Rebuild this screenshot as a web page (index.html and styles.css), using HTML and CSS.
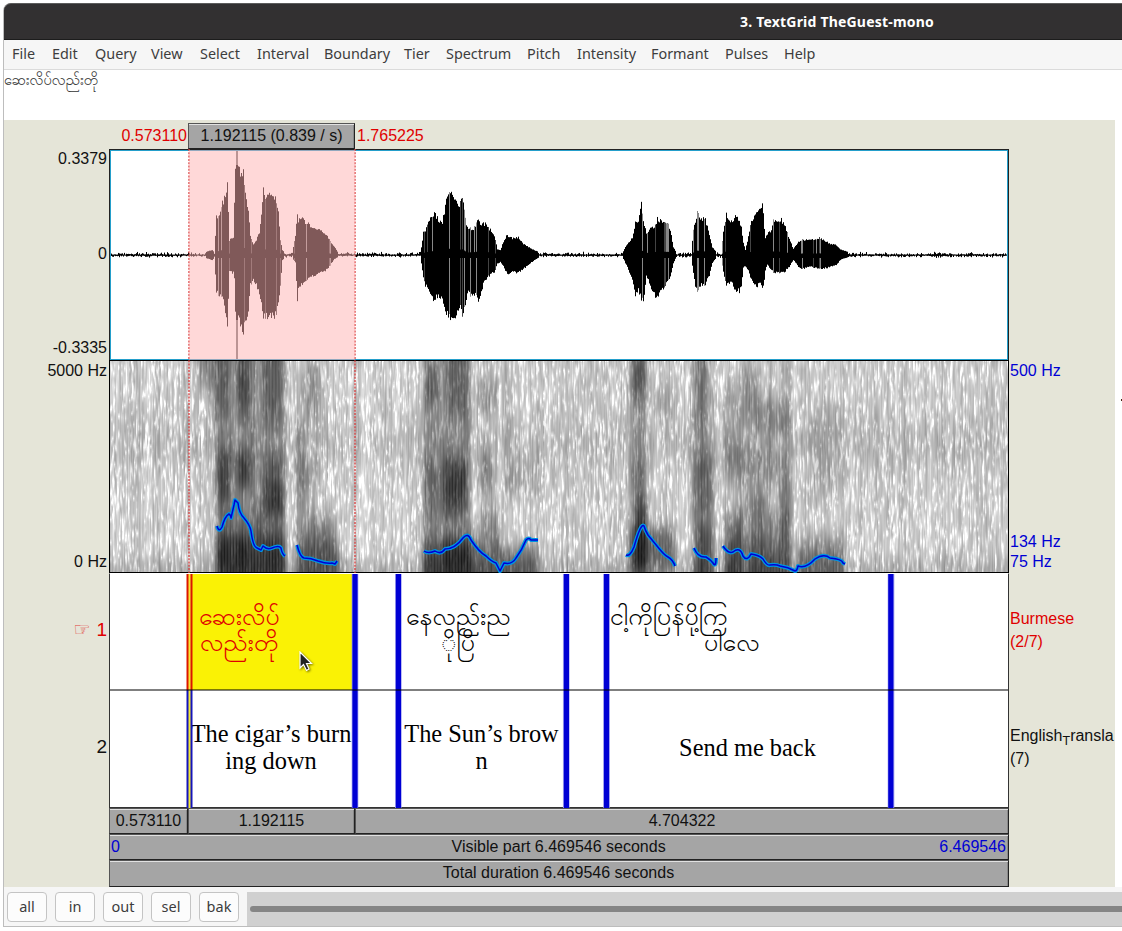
FILE: index.html
```html
<!DOCTYPE html>
<html lang="en">
<head>
<meta charset="utf-8">
<title>3. TextGrid TheGuest-mono</title>
<link rel="stylesheet" href="styles.css">
</head>
<body>
<div class="window">
  <header class="titlebar">3. TextGrid TheGuest-mono</header>
  <nav class="menubar">
    <span>File</span><span>Edit</span><span>Query</span><span>View</span><span>Select</span><span>Interval</span><span>Boundary</span><span>Tier</span><span>Spectrum</span><span>Pitch</span><span>Intensity</span><span>Formant</span><span>Pulses</span><span>Help</span>
  </nav>
  <div class="textfield" lang="my">ဆေးလိပ်လည်းတို</div>
  <main class="editor">
    <div class="left-labels">
      <div class="wave-scale"><span>0.3379</span><span>0</span><span>-0.3335</span></div>
      <div class="spec-scale"><span>5000 Hz</span><span>0 Hz</span></div>
      <div class="tier-no active"><span class="hand">☞</span>1</div>
      <div class="tier-no">2</div>
    </div>
    <div class="center">
      <div class="selection-row">
        <span class="time start">0.573110</span>
        <span class="bar duration">1.192115 (0.839 / s)</span>
        <span class="time end">1.765225</span>
      </div>
      <div class="wave"><canvas id="wave" width="898" height="209"></canvas><div class="selected"></div></div>
      <div class="spectrogram">
        <canvas id="spec" width="898" height="211"></canvas>
        <svg class="pitch" viewBox="110 361 898 211" width="898" height="211">
          <defs><g id="contours">
            <path d="M217 526Q219 533 222 527Q225 516 229 514Q231 515 231 518L234 505L235 500L238 503Q239 513 244 518Q250 525 251 531Q253 547 257 548L261 550L263 546Q267 550 272 548Q279 545 281 548Q282 554 285 556"/>
            <path d="M297 545Q300 557 304 558Q311 558 318 561Q327 564 332 563L335 564L337 561"/>
            <path d="M424 551Q428 554 435 551Q441 555 445 549Q455 549 463 538Q468 532 471 540Q479 552 486 556Q492 562 496 563L500 571L504 563Q512 565 516 558Q522 550 526 540Q529 537 531 540L538 540"/>
            <path d="M626 555Q630 557 634 547Q641 522 644 526Q645 530 648 535L657 546Q664 555 668 557Q673 560 675 566"/>
            <path d="M694 548Q698 558 706 557Q711 560 713 563Q716 568 716 558"/>
            <path d="M723 546Q728 554 733 552Q740 546 743 556Q747 562 751 554Q759 555 763 559Q767 566 770 565Q776 564 780 566Q788 567 795 571Q797 571 798 566Q806 569 815 559Q824 553 830 558Q842 559 843 563L845 564"/>
          </g></defs>
          <use href="#contours" class="pitch-halo"/><use href="#contours" class="pitch-line"/>
        </svg>
      </div>
      <div class="tiers">
        <div class="tier burmese" lang="my">
          <div></div>
          <div class="cell chosen"><p class="b1">ဆေးလိပ်</p><p class="b2">လည်းတို</p></div>
          <div></div>
          <div class="cell"><p class="b3">နေလည်းည</p><p class="b4">◌ိုပြိ</p></div>
          <div></div>
          <div class="cell"><p class="b5">ငါ့ကိုပြန်ပို့ကြ</p><p class="b6">ပါလေ</p></div>
          <div></div>
        </div>
        <div class="tier english">
          <div></div><div class="cell">The cigar’s burn<br>ing down</div><div></div><div class="cell">The Sun’s brow<br>n</div><div></div><div class="cell">Send me back</div><div></div>
        </div>
        <svg class="boundaries" viewBox="110 574 898 234" width="898" height="234">
          <path class="edge" d="M355 574v234M398.300 574v234M566.200 574v234M606.500 574v234M891 574v234"/>
          <path class="boundary" d="M355 574v234M398.500 574v234M566.500 574v234M606.500 574v234M890.800 574v234"/>
          <path class="red" d="M189.500 574v116"/><path class="blue" d="M189.500 690v118"/>
          <path class="core" d="M189.500 574v234"/><path class="divider" d="M110 690h898"/>
        </svg>
      </div>
      <div class="buttons-row">
        <div class="bar">0.573110</div><div class="bar">1.192115</div><div class="bar">4.704322</div>
      </div>
      <div class="bar visible"><span>0</span><b>Visible part 6.469546 seconds</b><span>6.469546</span></div>
      <div class="bar total">Total duration 6.469546 seconds</div>
      <svg class="markers" width="168" height="424" viewBox="0 0 168 424"><path d="M1 0v424M167 0v424"/></svg>
      <svg class="pointer" width="14" height="21" viewBox="0 0 14 21"><path d="M1 1V17L4.500 13.500L7.500 19.500L10 18L7.500 12.500H12.500Z"/></svg>
    </div>
    <div class="right-labels">
      <div class="pitch-scale"><span>500 Hz</span><span>134 Hz</span><span>75 Hz</span></div>
      <div class="tier-name red-text">Burmese<br>(2/7)</div>
      <div class="tier-name">English<sub>T</sub>ransla<br>(7)</div>
    </div>
  </main>
  <footer class="footer">
    <button>all</button><button>in</button><button>out</button><button>sel</button><button>bak</button>
    <div class="scroll"><div class="thumb"></div></div>
  </footer>
</div>
<i class="speck"></i>
<script src="plots.js"></script>
</body>
</html>
```
FILE: styles.css
```css
* { box-sizing: border-box; }
body { margin: 0; width: 1122px; height: 931px; overflow: hidden; background: #fff; font: 16px/18px "Liberation Sans", Arial, sans-serif; color: #111; position: relative; }
.window { margin: 3px 0 0 3px; width: 1119px; height: 924px; border-left: 1px solid #bdbdbd; border-bottom: 1px solid #bdbdbd; border-radius: 8px 0 0 0; display: flex; flex-direction: column; }
.titlebar { height: 37px; background: #323031; border-top: 1px solid #5c5c5c; border-bottom: 1px solid #1c1c1c; border-radius: 7px 0 0 0; color: #fff; font: bold 14px/35px "Noto Sans", sans-serif; padding-left: 736px; white-space: nowrap; letter-spacing: .2px; }
.menubar { height: 30px; background: #f6f6f6; border-bottom: 1px solid #dbdbdb; padding-left: 8px; display: grid; grid-template-columns: 40px 43px 56px 49px 57px 67px 80px 42px 81px 50px 74px 74px 59px 60px; font: 14.4px/28px "Noto Sans", sans-serif; color: #3d3d3d; white-space: nowrap; }
.textfield { height: 50px; background: #fff; font: 14.8px/22px "Padauk", "Noto Sans Myanmar", "Noto Sans", sans-serif; color: #333; }
.editor { width: 1111px; height: 767px; background: #e5e5d8; display: grid; grid-template-columns: 105px 900px 106px; }
.left-labels { text-align: right; padding: 29px 2px 0 0; }
.wave-scale { height: 211px; display: flex; flex-direction: column; justify-content: space-between; padding: 1px 0 3px; }
.wave-scale span:nth-child(2) { padding-top: 1px; }
.spec-scale { height: 213px; display: flex; flex-direction: column; justify-content: space-between; padding: 2px 0 2px; }
.tier-no { height: 117px; font-size: 19px; line-height: 113px; }
.active, .red-text { color: #e00000; }
.hand { font: 19px/20px "DejaVu Sans", sans-serif; margin-right: 6px; opacity: .75; }
.center { position: relative; }
.selection-row { height: 29px; padding-top: 3px; display: grid; grid-template-columns: 79px 167px 1fr; }
.time { color: #e00000; line-height: 25px; }
.start { justify-self: end; margin-right: 1px; }
.end { padding-left: 2px; }
.bar { background: #a5a5a5; border: 1px solid #555; border-right-color: #222; border-bottom-color: #222; box-shadow: inset 1px 2px 0 -1px #e1e1e1, inset -1px 0 0 #888; text-align: center; line-height: 24px; white-space: nowrap; }
.wave { position: relative; height: 211px; background: #fff; border: 1px solid #222; border-bottom: 0; }
.wave canvas, .spectrogram canvas { display: block; }
.wave::after { content: ""; position: absolute; inset: 0 0 0 0; border: 1px solid #249fcb; }
.selected { position: absolute; z-index: 2; left: 79px; top: 0; width: 166px; height: 210px; background: rgba(255,178,178,.5); }
.spectrogram { height: 213px; position: relative; border: 1px solid #000; }
.pitch { position: absolute; left: 0; top: 0; overflow: visible; z-index: 3; fill: none; stroke-linecap: butt; stroke-linejoin: round; }
.pitch-halo { stroke: #0095e0; stroke-width: 4; }
.pitch-line { stroke: #0000d5; stroke-width: 1.5; }
.tiers { position: relative; height: 235px; border: 1px solid #333; background: #fff; border-top-color: #fff; }
.tier { display: grid; grid-template-columns: 80px 165px 44px 168px 40px 284px 117px; height: 116px; }
.english { height: 117px; font: 24.4px/27px "Liberation Serif", "Times New Roman", serif; color: #000; text-align: center; }
.cell { display: flex; flex-direction: column; justify-content: center; white-space: nowrap; min-width: 0; }
.english .cell { align-items: center; display: grid; align-content: center; justify-content: center; padding: 0 3px 3px 0; }
.burmese { font: 25px/26px "Padauk", "Noto Sans Myanmar", "Noto Sans", sans-serif; color: #000; }
.burmese .cell { padding-bottom: 1px; }
.burmese p { margin: 0; height: 26px; }
.burmese .chosen { background: #faf205; color: #e00000; }
.b1 { padding-left: 9px; } .b2 { padding-left: 10px; } .b3 { padding-left: 7px; } .b4 { padding-left: 42px; } .b5 { padding-left: 3px; letter-spacing: .1px; } .b6 { padding-left: 97px; }
.boundaries { position: absolute; left: 0; top: 0; fill: none; }
.edge { stroke: #8585ea; stroke-width: 6.5; }
.boundary { stroke: #0000d4; stroke-width: 5; }
.red { stroke: #db1600; stroke-width: 6; }
.blue { stroke: #1414bb; stroke-width: 6; }
.core { stroke: #f5ea35; stroke-width: 2; }
.divider { stroke: rgba(0,0,0,.5); stroke-width: 2; }
.buttons-row { height: 26px; display: grid; grid-template-columns: 79px 167px 654px; }
.visible, .total { height: 26px; }
.total { height: 27px; padding-right: 1px; }
.visible { display: flex; justify-content: space-between; padding: 0 2px 0 1px; }
.visible b { font-weight: normal; padding-left: 58px; }
.visible span { color: #0000d4; }
.markers { position: absolute; left: 79px; top: 29px; fill: none; stroke: #d83c3c; stroke-width: 1.3; stroke-dasharray: 2 1.3; }
.pointer { position: absolute; left: 190px; top: 531px; fill: #222; stroke: #fff; stroke-width: 1.2; filter: drop-shadow(1px 1px 1px #0008); }
.right-labels { padding-top: 240px; overflow: hidden; white-space: nowrap; }
.pitch-scale { height: 213px; padding: 2px 0 2px 1px; color: #0000d4; display: flex; flex-direction: column; }
.pitch-scale span:nth-child(2) { margin-top: auto; margin-bottom: 2px; }
.tier-name { height: 117px; padding: 34px 0 0 1px; line-height: 23px; }
.tier-name sub { font-size: 12.5px; line-height: 0; }
.footer { height: 39px; background: #f6f6f6; display: flex; gap: 8px; padding: 5px 0 0 3px; }
.footer button { width: 40px; height: 30px; border: 1px solid #c4c4c4; border-radius: 4px; background: #fcfcfc; color: #3d3d3d; font: 14.5px/26px "Noto Sans", sans-serif; padding: 0 0 2px; }
.scroll { flex: 1; height: 34px; background: #d0d0d0; padding: 14px 0 0 3px; }
.thumb { height: 6px; border-radius: 3px 0 0 3px; background: #858585; }
.speck { position: absolute; width: 1px; height: 2px; left: 1121px; top: 399px; background: #421; }
```
FILE: plots.js
```js
let seed = 48271;
const rnd = () => (seed = seed * 16807 % 2147483647) / 2147483647;

// Waveform envelope: x, extent above the axis, extent below the axis.
const env = [110,2,2,200,2,2,205,3,3,212,5,5,214,3,3,216,38,38,219,40,40,222,52,42,226,62,62,227,73,70,229,15,17,233,18,18,234,50,25,235,90,60,236,106,104,237,106,104,238,90,60,239,85,66,241,80,70,243,84,78,245,60,65,248,45,55,250,20,30,253,10,25,256,15,30,259,22,40,262,50,55,263,66,60,265,55,60,268,63,62,272,60,62,276,55,60,278,45,50,280,15,30,282,5,5,285,2,2,292,3,3,295,20,8,297,41,44,298,35,34,301,38,30,305,32,26,310,30,22,320,26,18,325,22,16,330,14,10,334,8,4,338,2,2,
420,2,2,421,8,8,423,22,22,425,25,30,427,30,34,432,40,42,434,43,45,438,35,40,442,32,45,445,50,55,449,64,63,453,60,64,455,57,68,458,50,53,460,53,50,462,61,63,465,35,52,467,27,38,472,25,40,475,30,38,478,36,46,481,30,35,485,32,25,490,25,20,494,20,17,497,6,9,500,5,7,504,16,13,507,20,19,511,17,17,518,18,18,522,12,15,530,7,8,536,4,4,540,2,2,
622,2,2,625,8,8,632,17,25,635,32,42,638,36,36,640,45,40,641,55,45,643,33,46,646,22,22,650,27,30,654,28,40,657,36,42,662,34,35,668,30,25,671,20,18,673,8,8,676,2,2,691,3,3,693,25,18,695,32,30,697,45,38,700,37,30,705,36,30,709,20,20,712,8,8,716,3,3,721,3,3,723,25,18,726,40,30,729,34,28,732,33,28,735,40,35,739,34,36,741,28,30,743,12,12,745,5,12,748,18,15,751,33,25,756,44,32,759,50,28,762,51,32,764,28,26,765,18,15,767,22,10,771,24,15,773,34,18,777,32,18,781,35,18,785,28,16,789,16,12,793,6,5,797,12,10,800,15,14,810,15,12,820,17,14,830,11,12,836,10,10,840,6,5,845,4,3,850,2,2,1009,2,2];
const w = document.getElementById('wave').getContext('2d');
let k = 0;
for (let x = 110; x < 1008; x++) {
  while (x >= env[k + 3]) k += 3;
  const t = (x - env[k]) / (env[k + 3] - env[k]);
  let up = env[k + 1] + t * (env[k + 4] - env[k + 1]);
  let dn = env[k + 2] + t * (env[k + 5] - env[k + 2]);
  const quiet = up <= 3;
  if (quiet) { up = .4 + rnd() * rnd() * 3; dn = .6 + rnd() * rnd() * 2.4; }
  else if (up < 95) { up *= .92 + rnd() * .14; dn *= .92 + rnd() * .14; }
  w.fillStyle = up >= 95 ? '#777' : '#000';
  w.fillRect(x - 110, 105 - up, 1, up + dn);
  if (up >= 95) { w.fillStyle = '#000'; w.fillRect(x - 110, 15, 1, 155); }
  const r = rnd();
  if (up > 12 && up < 95 && r < .17) {
    w.fillStyle = r < .08 ? '#888' : '#444';
    w.fillRect(x - 110, 105 - up, 1, up * .9);
    if (rnd() < .7) w.fillRect(x - 110, 108, 1, dn - 3);
  }
}

// Energy areas: x0, y0, x1, y1, strength.
const areas = [
198,361,214,385,.25,212,361,230,420,.22,236,361,251,390,.3,237,382,250,408,.3,238,405,252,423,.24,262,361,281,425,.27,297,370,321,416,.16,
217,450,229,500,.45,236,452,251,487,.5,262,454,282,515,.32,266,486,282,511,.25,217,500,284,545,.14,217,536,284,571,.48,234,544,248,563,.35,217,544,229,563,.25,265,544,282,563,.2,214,361,284,571,.17,
296,425,305,515,.26,297,467,320,485,.14,297,518,334,550,.28,296,545,338,571,.44,
424,361,469,572,.2,425,370,438,401,.25,447,361,467,415,.22,424,463,466,517,.18,444,460,466,510,.32,477,380,496,407,.2,479,454,492,492,.25,505,368,512,505,.12,507,460,538,491,.12,424,540,500,571,.44,444,540,471,567,.26,480,511,498,535,.26,500,548,537,571,.4,
629,361,646,571,.16,632,361,646,400,.28,631,462,643,484,.26,635,496,646,570,.46,629,530,674,567,.42,653,388,675,414,.14,
694,361,711,571,.16,695,360,706,430,.19,694,450,713,515,.28,695,525,713,571,.4,
724,381,741,460,.14,742,371,759,425,.2,755,398,789,435,.22,725,449,788,485,.2,725,516,741,571,.36,736,500,748,556,.16,750,492,767,571,.32,768,515,789,571,.25,779,480,790,530,.25,725,540,790,571,.22,810,400,840,500,.1,797,542,843,571,.34,782,361,790,571,.1];
const W = 898, H = 211;
const dark = new Float32Array(W * H);
for (let i = 0; i < areas.length; i += 5) {
  const [x0, y0, x1, y1, s] = areas.slice(i, i + 5);
  for (let y = Math.max(0, y0 - 391); y < Math.min(H, y1 - 331); y++)
    for (let x = Math.max(0, x0 - 120); x < Math.min(W, x1 - 100); x++) {
      const X = x + 110, Y = y + 361;
      const gx = 1 / (1 + Math.exp((x0 - X) / 1.5)) / (1 + Math.exp((X - x1) / 1.5));
      const top = y0 <= 361 ? 1 : 1 / (1 + Math.exp((y0 - Y) / 6));
      const bottom = y1 >= 571 ? 1 : 1 / (1 + Math.exp((Y - y1) / 6));
      dark[y * W + x] += s * gx * top * bottom;
    }
}
const c = document.getElementById('spec').getContext('2d');
const img = c.createImageData(W, H);
const fleck = new Float32Array(W * H);
for (let i = 0; i < 7500; i++) {
  const x = rnd() * W | 0, y = rnd() * H, len = 3 + rnd() * 8, a = 12 + rnd() * 48;
  for (let d = -len | 0; d < len; d++) {
    const yy = (y + d) | 0;
    if (yy >= 0 && yy < H) {
      const v = a * (1 - Math.abs(d) / len);
      fleck[yy * W + x] += v;
      if (x + 1 < W) fleck[yy * W + x + 1] += v * .5;
    }
  }
}
let slow = 0;
const last = new Float32Array(H);
for (let x = 0; x < W; x++) {
  slow = slow * .6 + (rnd() - .5) * 20;
  const pulse = x % 3 ? 0 : -1;
  let from = rnd(), to = rnd(), p = 0, step = 9;
  for (let y = 0; y < H; y++) {
    if (++p > step) { from = to; to = rnd(); p = 0; step = 8 + rnd() * 20; }
    const n = last[y] * .4 + (from + (to - from) * p / step - .5) * 32;
    last[y] = n;
    const band = 16 * Math.exp(-(((y - 82) / 26) ** 2)) + 26 * Math.exp(-(((y - 207) / 12) ** 2));
    const d = dark[y * W + x];
    const g = (197 - band + slow + n + Math.min(fleck[y * W + x], 62)) * Math.exp(-d * 1.65) + pulse * Math.min(d, .8) * 25;
    const o = (y * W + x) * 4, v = Math.max(5, Math.min(255, g));
    img.data[o] = img.data[o + 1] = img.data[o + 2] = v;
    img.data[o + 3] = 255;
  }
}
c.putImageData(img, 0, 0);
```
